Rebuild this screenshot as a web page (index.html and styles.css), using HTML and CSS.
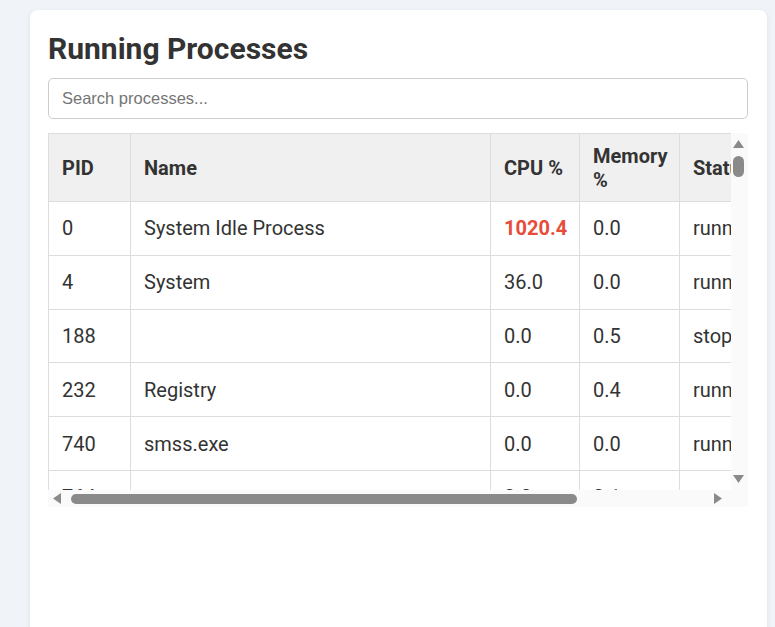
FILE: index.html
```html
<!DOCTYPE html>
<html lang="en">
<head>
<meta charset="utf-8">
<title>Running Processes</title>
<link rel="stylesheet" href="styles.css">
</head>
<body>
<div class="card">
  <h2 class="title">Running Processes</h2>
  <input class="search" type="text" placeholder="Search processes...">
  <div class="table-frame">
    <div class="table-view">
      <table class="proc-table">
        <colgroup>
          <col class="c-pid"><col class="c-name"><col class="c-cpu"><col class="c-mem"><col class="c-status"><col class="c-user">
        </colgroup>
        <thead>
          <tr><th>PID</th><th>Name</th><th>CPU %</th><th>Memory %</th><th>Status</th><th>User</th></tr>
        </thead>
        <tbody id="rows">
          <tr><td>0</td><td>System Idle Process</td><td class="high">1020.4</td><td>0.0</td><td>running</td><td>SYSTEM</td></tr>
          <tr><td>4</td><td>System</td><td>36.0</td><td>0.0</td><td>running</td><td>SYSTEM</td></tr>
          <tr><td>188</td><td></td><td>0.0</td><td>0.5</td><td>stopped</td><td></td></tr>
          <tr><td>232</td><td>Registry</td><td>0.0</td><td>0.4</td><td>running</td><td>SYSTEM</td></tr>
          <tr><td>740</td><td>smss.exe</td><td>0.0</td><td>0.0</td><td>running</td><td>SYSTEM</td></tr>
          <tr><td>764</td><td>csrss.exe</td><td>0.0</td><td>0.1</td><td>running</td><td>SYSTEM</td></tr>
        </tbody>
      </table>
    </div>
    <div class="vbar">
      <svg class="arrow-up" width="11" height="8" viewBox="0 0 11 8"><polygon points="5.5,0 11,8 0,8" fill="#8a8a8a"/></svg>
      <div class="vthumb"></div>
      <div class="spacer"></div>
      <svg class="arrow-down" width="11" height="8" viewBox="0 0 11 8"><polygon points="0,0 11,0 5.5,8" fill="#8a8a8a"/></svg>
    </div>
    <div class="hbar">
      <svg class="arrow-left" width="8" height="11" viewBox="0 0 8 11"><polygon points="8,0 8,11 0,5.5" fill="#8a8a8a"/></svg>
      <div class="hthumb"></div>
      <div class="spacer"></div>
      <svg class="arrow-right" width="8" height="11" viewBox="0 0 8 11"><polygon points="0,0 8,5.5 0,11" fill="#8a8a8a"/></svg>
    </div>
    <div class="corner"></div>
  </div>
</div>
</body>
</html>
```

FILE: styles.css
```css
html, body {
  margin: 0;
  padding: 0;
}
body {
  background: #f0f4f8;
  font-family: Roboto, "Liberation Sans", Arial, sans-serif;
  color: #333;
  padding: 10px 8px 0 30px;
  height: 627px;
  box-sizing: border-box;
  overflow: hidden;
}
.card {
  background: #fff;
  border-radius: 8px;
  box-shadow: 0 2px 6px rgba(0, 0, 0, 0.08);
  padding: 21px 19px 140px 18px;
  min-height: 700px;
  box-sizing: border-box;
}
.title {
  margin: 0 0 12px;
  font-size: 30px;
  font-weight: 700;
  line-height: 35px;
  color: #333;
}
.search {
  display: block;
  width: 100%;
  box-sizing: border-box;
  height: 41px;
  padding: 0 13px;
  border: 1px solid #ccc;
  border-radius: 5px;
  font-family: "Liberation Sans", Arial, sans-serif;
  font-size: 16.5px;
  color: #333;
  margin: 0 0 14px;
}
.search::placeholder {
  color: #757575;
}
.table-frame {
  display: grid;
  grid-template-columns: 683px 17px;
  grid-template-rows: 357px 17px;
}
.table-view {
  overflow: hidden;
}
.proc-table {
  border-collapse: collapse;
  table-layout: fixed;
  width: 870px;
  font-size: 20px;
}
.c-pid { width: 82px; }
.c-name { width: 360px; }
.c-cpu { width: 89px; }
.c-mem { width: 100px; }
.c-status { width: 120px; }
.c-user { width: 119px; }
.proc-table th,
.proc-table td {
  border: 1px solid #ddd;
  text-align: left;
  padding: 14.4px 13px;
  white-space: normal;
  overflow: hidden;
}
.proc-table th {
  background: #f0f0f0;
  font-weight: 700;
  padding: 9.5px 13px;
}
.proc-table td {
  font-weight: 400;
}
.proc-table td.high {
  color: #e74c3c;
  font-weight: 700;
}
.vbar {
  background: #fafafa;
  display: flex;
  flex-direction: column;
  align-items: center;
  padding: 7px 0 7px 0;
}
.vbar svg {
  display: block;
  flex: none;
  margin-left: -2px;
}
.vthumb {
  width: 11px;
  height: 21px;
  border-radius: 6px;
  background: #8a8a8a;
  margin: 8px 0 0 -2px;
  flex: none;
}
.spacer {
  flex: 1;
}
.hbar {
  background: #fafafa;
  display: flex;
  align-items: center;
  padding: 0 9px 0 5px;
}
.hbar svg {
  display: block;
  flex: none;
}
.hthumb {
  width: 506px;
  height: 10px;
  border-radius: 5px;
  background: #8a8a8a;
  margin-left: 10px;
  flex: none;
}
.corner {
  background: #fafafa;
}
```
